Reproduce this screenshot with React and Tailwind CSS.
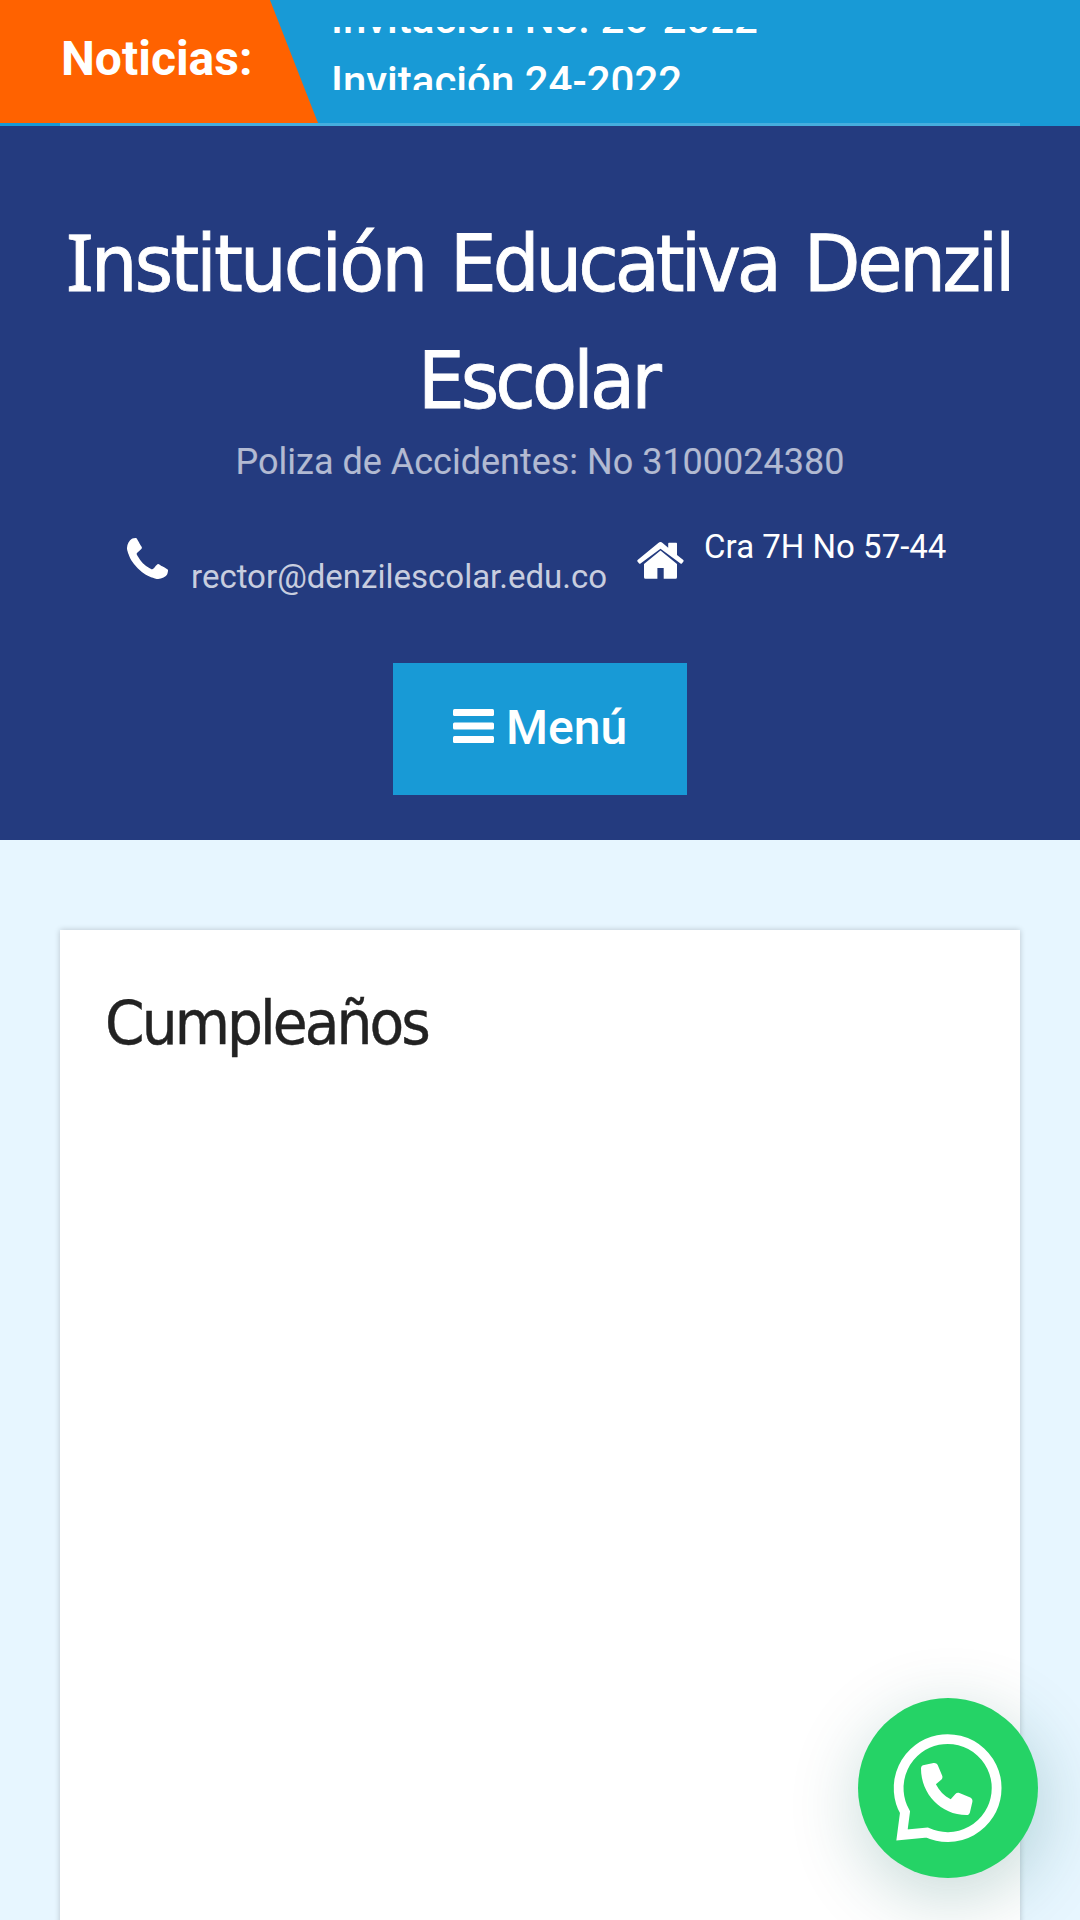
import React from "react";

function Ticker() {
  return (
    <div className="h-[126px] shrink-0 bg-[#189ad6] flex flex-col">
      <div className="flex h-[123px]">
        <div className="w-[318px] h-[123px] bg-[#ff6200] pl-[61px] pt-[23px] [clip-path:polygon(0_0,270px_0,318px_100%,0_100%)]">
          <span className="block text-[48px] leading-[72px] font-bold text-white whitespace-nowrap">Noticias:</span>
        </div>
        <div className="mt-[27px] ml-[13px] h-[63px] overflow-hidden">
          <ul className="-mt-[40px] text-[42px] leading-[63px] font-medium text-white whitespace-nowrap">
            <li>Invitación No. 26-2022</li>
            <li>Invitación 24-2022</li>
          </ul>
        </div>
      </div>
      <div className="mx-[60px] h-[3px] bg-[#46aede]" />
    </div>
  );
}

function Header() {
  return (
    <header className="h-[714px] shrink-0 bg-[#243b7f] flex flex-col items-center text-white">
      <h1 className="mt-[80px] mr-[3px] w-[980px] text-center font-['DejaVu_Sans_Condensed','DejaVu_Sans',sans-serif] [font-stretch:condensed] text-[78px] leading-[117px] tracking-[-2.7px] [word-spacing:3px] [-webkit-text-stroke:0.8px_white] scale-x-[1.05]">
        <span className="block whitespace-nowrap">
          <span className="font-['Noto_Sans',sans-serif] leading-none">I</span>nstitución{" "}
          <span className="ml-[1px] tracking-[-3.8px]">Educativa</span>{" "}
          <span className="ml-[2px] tracking-[-3.2px]">Denzil</span>
        </span>
        <span className="block tracking-[-3.6px] pr-[2px]">Escolar</span>
      </h1>
      <p className="mt-[-5px] text-[36px] leading-[54px] text-white/65 whitespace-nowrap">Poliza de Accidentes: No 3100024380</p>
      <div className="mt-[33px] w-[1080px] h-[90px] shrink-0 flex items-start whitespace-nowrap text-[33px] leading-[50px]">
        <svg className="ml-[127px] mt-[16px] w-[41px] h-[41px] shrink-0" viewBox="0 0 1408 1408" fill="currentColor">
          <path transform="translate(0,1408) scale(1,-1)" d="M1408 296q0 -27 -10 -70.500t-21 -68.500q-21 -50 -122 -106q-94 -51 -186 -51q-27 0 -52.500 3.500t-57.500 12.500t-47.500 14.500t-55.500 20.500t-49 18q-98 35 -175 83q-128 79 -264.500 215.500t-215.500 264.500q-48 77 -83 175q-3 9 -18 49t-20.500 55.500t-14.500 47.500t-12.500 57.500t-3.500 52.500q0 92 51 186q56 101 106 122q25 11 68.500 21t70.500 10q14 0 21 -3q18 -6 53 -76q11 -19 30 -54t35 -63.500t31 -53.500q3 -4 17.500 -25t21.500 -35.500t7 -28.500q0 -20 -28.500 -50t-62 -55t-62 -53t-28.500 -46q0 -9 5 -22.500t8.500 -20.500t14 -24t11.500 -19q76 -137 174 -235t235 -174q2 -1 19 -11.500t24 -14t20.500 -8.500t22.500 -5q18 0 46 28.500t53 62t55 62t50 28.500q14 0 28.500 -7t35.500 -21.500t25 -17.500q25 -15 53.500 -31t63.500 -35t54 -30q70 -35 76 -53q3 -7 3 -21z" />
        </svg>
        <span className="ml-[23px] mt-[30px] text-white/75">rector@denzilescolar.edu.co</span>
        <svg className="ml-[30px] mt-[20px] w-[47px] h-[37px] shrink-0" viewBox="0 0 47 37" fill="currentColor">
          <path d="M23.500 8.500L40 22v13.200a1.500 1.500 0 0 1-1.500 1.500H26.700V26h-6.300v10.700H8.500A1.500 1.500 0 0 1 7 35.200V22z" />
          <path d="M21.300 1a3.400 3.400 0 0 1 4.300 0l5.600 4.700V1.800c0-.6.400-1 1-1h6.800c.6 0 1 .4 1 1v11.100l6.300 5.200c.4.400.5 1 .1 1.400l-1.500 1.900c-.4.400-1 .5-1.400.1L23.500 6.800 3.500 21.500c-.4.400-1 .3-1.400-.1L.5 19.500c-.4-.4-.3-1 .1-1.400z" />
        </svg>
        <span className="ml-[20px]">Cra 7H No 57-44</span>
      </div>
      <button className="mt-[51px] shrink-0 w-[294px] h-[132px] bg-[#189ad6] flex items-start pl-[60px] pt-[29px] text-[48px] leading-[72px] font-medium">
        <svg className="mt-[17px] w-[41px] h-[34px] shrink-0" viewBox="0 0 41 34" fill="currentColor">
          <rect width="41" height="7" rx="1.500" />
          <rect y="13.500" width="41" height="7" rx="1.500" />
          <rect y="27" width="41" height="7" rx="1.500" />
        </svg>
        <span className="ml-[12px]">Menú</span>
      </button>
    </header>
  );
}

function WhatsAppButton() {
  return (
    <button aria-label="WhatsApp" className="fixed left-[858px] top-[1698px] w-[180px] h-[180px] rounded-full bg-[#25d366] shadow-[3px_18px_72px_rgba(7,94,84,0.24)]">
      <svg className="w-[180px] h-[180px]" viewBox="0 0 180 180" fill="none">
        <path transform="translate(1,0.700)" d="M46 113.500A49 49 0 1 1 68 133.800L43 136.300Z" stroke="#fff" strokeWidth="9.800" strokeMiterlimit="10" />
        <path d="M65 67.200l10.500-2.200c1.800-.3 3.500.5 4.200 2.100l4.500 10.600c.6 1.400.2 3-1 4l-5.300 4.500c3.200 6.500 8.300 11.700 14.800 15.100l4.700-5.300c1-1.200 2.600-1.600 4-1l10.900 4.500c1.600.7 2.500 2.400 2.100 4.200l-2.500 10.700c-.4 1.600-1.700 2.600-3.400 2.600C83 117 63 96 63 70.500c0-1.600.6-2.900 2-3.300z" fill="#fff" />
      </svg>
    </button>
  );
}

export default function App() {
  return (
    <div className="w-[1080px] h-[1920px] overflow-hidden bg-[#e7f6ff] font-['Roboto',sans-serif] flex flex-col">
      <Ticker />
      <Header />
      <main className="mt-[90px] mx-[60px] h-[1100px] shrink-0 bg-white px-[45px] pt-[48px] shadow-[0_0_6px_rgba(0,0,0,0.2)]">
        <h2 className="origin-left scale-x-[1.05] font-['DejaVu_Sans_Condensed','DejaVu_Sans',sans-serif] [font-stretch:condensed] text-[60px] leading-[90px] tracking-[-2.8px] [-webkit-text-stroke:0.4px_#222] text-[#222]">Cumpleaños</h2>
      </main>
      <WhatsAppButton />
    </div>
  );
}
